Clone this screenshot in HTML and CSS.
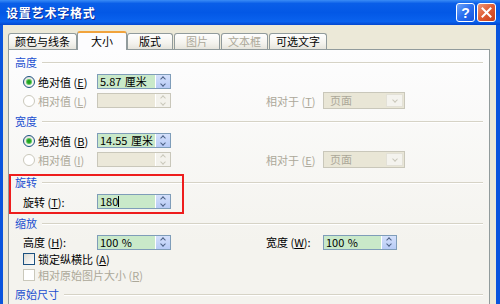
FILE: index.html
```html
<!DOCTYPE html>
<html lang="zh-CN">
<head>
    <meta charset="UTF-8">
    <meta name="viewport" content="width=device-width, initial-scale=1.0">
    <title>设置艺术字格式</title>
    <link rel="stylesheet" href="styles.css">
</head>
<body>
    <div class="window">
        <!-- Title bar -->
        <div class="titlebar">
            <span class="title">设置艺术字格式</span>
            <div class="caption-buttons">
                <span class="cap-btn help">?</span>
                <span class="cap-btn close">
                    <svg width="11" height="11" viewBox="0 0 11 11"><path d="M1.5 1.5 L9.5 9.5 M9.5 1.5 L1.5 9.5" stroke="#fff" stroke-width="2" stroke-linecap="square"/></svg>
                </span>
            </div>
        </div>

        <div class="frame">
            <!-- Tabs -->
            <div class="tabs">
                <span class="tab">颜色与线条</span>
                <span class="tab active">大小</span>
                <span class="tab">版式</span>
                <span class="tab disabled">图片</span>
                <span class="tab disabled">文本框</span>
                <span class="tab">可选文字</span>
            </div>

            <div class="panel">
                <!-- 高度 -->
                <div class="group">
                    <div class="group-title">高度</div>
                    <div class="row">
                        <label class="field-label"><span class="radio checked"></span>绝对值 (<u>E</u>)</label>
                        <div class="spin"><span class="spin-text">5.87 厘米</span><span class="spin-btns"><span class="spin-up"></span><span class="spin-down"></span></span></div>
                    </div>
                    <div class="row disabled">
                        <label class="field-label"><span class="radio"></span>相对值 (<u>L</u>)</label>
                        <div class="spin"><span class="spin-text"></span><span class="spin-btns"><span class="spin-up"></span><span class="spin-down"></span></span></div>
                        <span class="rel-label">相对于 (<u>T</u>)</span>
                        <div class="select"><span class="select-text">页面</span><span class="select-btn"></span></div>
                    </div>
                </div>

                <!-- 宽度 -->
                <div class="group">
                    <div class="group-title">宽度</div>
                    <div class="row">
                        <label class="field-label"><span class="radio checked"></span>绝对值 (<u>B</u>)</label>
                        <div class="spin"><span class="spin-text">14.55 厘米</span><span class="spin-btns"><span class="spin-up"></span><span class="spin-down"></span></span></div>
                    </div>
                    <div class="row disabled">
                        <label class="field-label"><span class="radio"></span>相对值 (<u>I</u>)</label>
                        <div class="spin"><span class="spin-text"></span><span class="spin-btns"><span class="spin-up"></span><span class="spin-down"></span></span></div>
                        <span class="rel-label">相对于 (<u>E</u>)</span>
                        <div class="select"><span class="select-text">页面</span><span class="select-btn"></span></div>
                    </div>
                </div>

                <!-- 旋转 -->
                <div class="group group-rotate">
                    <div class="group-title">旋转</div>
                    <div class="row">
                        <label class="field-label">旋转 (<u>T</u>):</label>
                        <div class="spin"><span class="spin-text">180<span class="caret"></span></span><span class="spin-btns"><span class="spin-up"></span><span class="spin-down"></span></span></div>
                    </div>
                </div>

                <!-- 缩放 -->
                <div class="group group-scale">
                    <div class="group-title">缩放</div>
                    <div class="row row-scale">
                        <label class="field-label">高度 (<u>H</u>):</label>
                        <div class="spin"><span class="spin-text">100 %</span><span class="spin-btns"><span class="spin-up"></span><span class="spin-down"></span></span></div>
                        <span class="rel-label">宽度 (<u>W</u>):</span>
                        <div class="spin"><span class="spin-text">100 %</span><span class="spin-btns"><span class="spin-up"></span><span class="spin-down"></span></span></div>
                    </div>
                    <div class="row row-check">
                        <label class="check-label"><span class="checkbox"></span>锁定纵横比 (<u>A</u>)</label>
                    </div>
                    <div class="row row-check disabled">
                        <label class="check-label"><span class="checkbox"></span>相对原始图片大小 (<u>R</u>)</label>
                    </div>
                </div>

                <!-- 原始尺寸 -->
                <div class="group group-orig">
                    <div class="group-title">原始尺寸</div>
                </div>

                <div class="highlight"></div>
            </div>
        </div>
    </div>
</body>
</html>
```

FILE: styles.css
```css
body {
    margin: 0;
    width: 500px;
    height: 304px;
    overflow: hidden;
    font-family: "Noto Sans CJK SC", "Liberation Sans", sans-serif;
    font-size: 11px;
    color: #000;
    background: #ece9d8;
}
.window {
    height: 304px;
    display: flex;
    flex-direction: column;
}
.titlebar {
    height: 25px;
    flex: none;
    display: flex;
    align-items: center;
    padding: 0 4px 0 6px;
    background: linear-gradient(#3a8cf6 0%, #0a5ee8 14%, #0358e6 50%, #0a62ee 86%, #0447cf 100%);
}
.title {
    color: #fff;
    font-weight: bold;
    font-size: 12px;
    letter-spacing: 0.8px;
    text-shadow: 1px 1px 0 #0b2a9a;
}
.caption-buttons {
    margin-left: auto;
    display: flex;
    gap: 2px;
}
.cap-btn {
    width: 19px;
    height: 19px;
    box-sizing: border-box;
    border: 1px solid #fff;
    border-radius: 3px;
    display: flex;
    align-items: center;
    justify-content: center;
}
.help {
    background: linear-gradient(135deg, #6ea3f7, #2a6ff0 50%, #1553dc);
    color: #fff;
    font-family: "Liberation Sans", sans-serif;
    font-weight: bold;
    font-size: 14px;
}
.close {
    background: linear-gradient(135deg, #ee9a7c, #df5b32 50%, #c6401c);
}
.frame {
    flex: 1;
    overflow: hidden;
    border-left: 3px solid #0a55dd;
    border-right: 4px solid #0a55dd;
    padding: 6px 6px 0 5px;
}
.tabs {
    display: flex;
    align-items: flex-end;
    height: 18px;
}
.tab {
    height: 16px;
    min-width: 46px;
    box-sizing: border-box;
    padding: 0 6px;
    margin-right: 1px;
    border: 1px solid #919b9c;
    border-bottom: none;
    border-radius: 3px 3px 0 0;
    background: linear-gradient(#fefefe, #f4f3ee 60%, #e6e4dc);
    text-align: center;
    line-height: 15px;
    white-space: nowrap;
}
.tab.active {
    position: relative;
    z-index: 1;
    height: 19px;
    min-width: 50px;
    margin: 0 0 -1px -1px;
    background: #fcfcfe;
    border-top: 2px solid #f1a33c;
    line-height: 16px;
}
.tab.disabled {
    color: #aca899;
}
.panel {
    position: relative;
    height: 270px;
    border: 1px solid #919b9c;
    background: linear-gradient(#fdfdfe, #f4f3ee 70%);
    padding: 4px 0 0 0;
}
.group {
    padding: 0 6px;
}
.group + .group {
    margin-top: 3px;
}
.group.group-rotate {
    margin-top: 5px;
}
.group.group-scale {
    margin-top: 4px;
}
.group-title {
    height: 16px;
    display: flex;
    align-items: center;
    color: #1b4fd0;
    margin-bottom: 2px;
}
.group-title::after {
    content: "";
    flex: 1;
    height: 1px;
    margin-left: 5px;
    background: #d6d3c6;
    box-shadow: 0 1px 0 #fff;
}
.row {
    height: 19px;
    display: flex;
    align-items: center;
    padding-left: 8px;
}
.row-scale {
    height: 18px;
}
.row-check {
    height: 16px;
}
.field-label {
    width: 74px;
    display: flex;
    align-items: center;
    white-space: nowrap;
}
.disabled .field-label,
.disabled .rel-label,
.disabled .check-label {
    color: #aca899;
}
.radio {
    width: 12px;
    height: 12px;
    box-sizing: border-box;
    border: 1px solid #1c5180;
    border-radius: 50%;
    background: radial-gradient(circle at 60% 65%, #fff, #dcdad2);
    margin-right: 3px;
    display: flex;
    align-items: center;
    justify-content: center;
}
.radio.checked::after {
    content: "";
    width: 4px;
    height: 4px;
    border-radius: 50%;
    background: #21a121;
    box-shadow: 0 0 0 1px #5ec85e;
}
.disabled .radio {
    border-color: #cac8bb;
    background: #fff;
}
.check-label {
    display: flex;
    align-items: center;
    white-space: nowrap;
}
.checkbox {
    width: 12px;
    height: 12px;
    box-sizing: border-box;
    border: 1px solid #1c5180;
    background: linear-gradient(135deg, #dcdad2, #fff);
    margin-right: 3px;
}
.disabled .checkbox {
    border-color: #cac8bb;
    background: #fff;
}
.spin {
    width: 74px;
    height: 15px;
    box-sizing: border-box;
    border: 1px solid #7f9db9;
    background: #c9e9c9;
    display: flex;
}
.spin-text {
    flex: 1;
    padding-left: 2px;
    line-height: 13px;
    white-space: pre;
    word-spacing: 1px;
    display: flex;
    align-items: center;
}
.caret {
    width: 1px;
    height: 11px;
    background: #000;
}
.spin-btns {
    width: 14px;
    display: flex;
    flex-direction: column;
    background: linear-gradient(#d4e0fb, #b7cbf6);
    border-left: 1px solid #fff;
}
.spin-up,
.spin-down {
    flex: 1;
    display: flex;
    align-items: center;
    justify-content: center;
}
.spin-up::before,
.spin-down::before {
    content: "";
    width: 3px;
    height: 3px;
    border-left: 1.5px solid #4d6185;
    border-top: 1.5px solid #4d6185;
}
.spin-up::before {
    transform: translateY(1px) rotate(45deg);
}
.spin-down::before {
    transform: translateY(-1px) rotate(225deg);
}
.disabled .spin {
    border-color: #c9c7ba;
    background: #ebe8d9;
}
.disabled .spin-btns {
    background: #f3f2ec;
}
.disabled .spin-up::before,
.disabled .spin-down::before {
    border-color: #cac8bb;
}
.rel-label {
    margin-left: 95px;
    width: 57px;
    white-space: nowrap;
}
.select {
    width: 82px;
    height: 17px;
    box-sizing: border-box;
    border: 1px solid #c9c7ba;
    background: #e9e6d6;
    display: flex;
}
.select-text {
    flex: 1;
    padding-left: 6px;
    color: #aca899;
    line-height: 15px;
}
.select-btn {
    width: 15px;
    margin: 1px;
    background: #f4f3ee;
    border: 1px solid #e3e1d7;
    display: flex;
    align-items: center;
    justify-content: center;
}
.select-btn::before {
    content: "";
    width: 3px;
    height: 3px;
    border-left: 1.5px solid #c9c7ba;
    border-top: 1.5px solid #c9c7ba;
    transform: translateY(-1px) rotate(225deg);
}
.highlight {
    position: absolute;
    left: 0;
    top: 124px;
    width: 175px;
    height: 40px;
    box-sizing: border-box;
    border: 2px solid #ee1d1d;
}
```
